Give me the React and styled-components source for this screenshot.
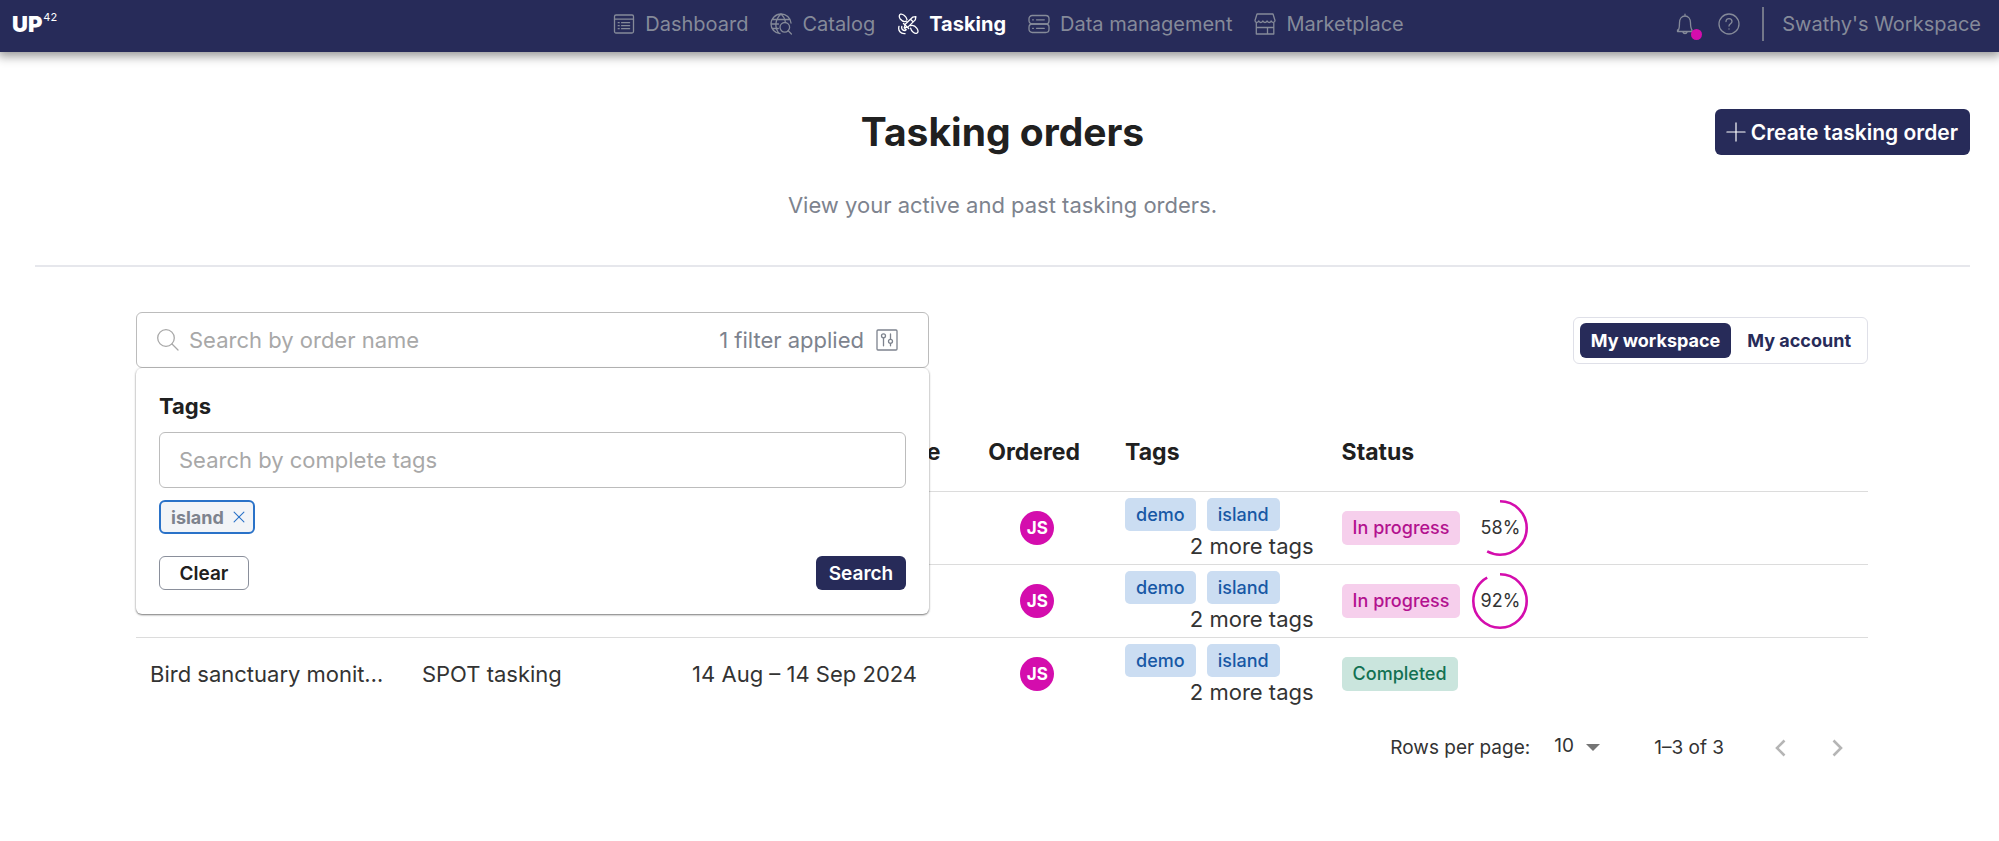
import styled, { createGlobalStyle } from "styled-components";

const navy = "#272b59";
const pink = "#d40dad";
const grey = "#7d838e";

const GlobalStyle = createGlobalStyle`
  * {
    box-sizing: border-box;
  }
  body {
    margin: 0;
    background: #fff;
    color: #202020;
    font-family: Inter, "Liberation Sans", sans-serif;
    font-size: 22px;
  }
  button, input, select {
    font-family: inherit;
  }
`;

const Header = styled.header`
  display: grid;
  grid-template-columns: 1fr auto 1fr;
  align-items: center;
  height: 52px;
  padding: 0 18px 4px 12px;
  background: ${navy};
  box-shadow: 0 2px 10px 2px rgba(0, 0, 0, 0.42);
`;

const Logo = styled.a`
  display: flex;
  align-items: flex-start;
  color: #fff;
  font-size: 22px;
  font-weight: 900;
  line-height: 24px;
  text-decoration: none;
  sup {
    margin-left: 1px;
    font-size: 11px;
    font-weight: 400;
    line-height: 11px;
  }
`;

const Nav = styled.nav`
  display: flex;
  gap: 22px;
  margin-left: 24px;
`;

const NavLink = styled.a`
  display: flex;
  align-items: center;
  gap: 10px;
  color: ${(props) => (props.$active ? "#fff" : "#858a99")};
  font-size: 20px;
  font-weight: ${(props) => (props.$active ? 700 : 400)};
  line-height: 24px;
  text-decoration: none;
`;

const Icon = styled.svg.attrs({ viewBox: "0 0 22 22", "aria-hidden": true })`
  flex: none;
  width: ${(props) => props.$size || 22}px;
  height: ${(props) => props.$size || 22}px;
  fill: none;
  stroke: currentColor;
  stroke-width: 1.3;
  stroke-linecap: round;
  stroke-linejoin: round;
`;

const Account = styled.div`
  display: flex;
  align-items: center;
  justify-content: flex-end;
  color: #858a99;
`;

const IconButton = styled.button`
  position: relative;
  display: flex;
  margin-right: 22px;
  padding: 0;
  border: 0;
  background: none;
  color: inherit;
`;

const Dot = styled.span`
  position: absolute;
  right: -6px;
  bottom: -5px;
  width: 11px;
  height: 11px;
  border-radius: 50%;
  background: ${pink};
`;

const Workspace = styled.a`
  padding-left: 18px;
  border-left: 2px solid #737789;
  color: inherit;
  font-size: 20px;
  line-height: 34px;
  text-decoration: none;
`;

const Main = styled.main`
  padding: 0 29px 0 35px;
`;

const Intro = styled.div`
  display: grid;
  grid-template-columns: 1fr auto 1fr;
  align-items: center;
  padding: 56px 0 47px;
  border-bottom: 2px solid #e6e7ec;
  h1 {
    margin: 0;
    font-size: 39px;
    font-weight: 700;
    line-height: 48px;
  }
  p {
    grid-column: 1 / -1;
    margin: 36px 0 0;
    color: ${grey};
    line-height: 26px;
    text-align: center;
  }
`;

const CreateButton = styled.button`
  grid-column: 3;
  justify-self: end;
  display: flex;
  align-items: center;
  gap: 5px;
  height: 46px;
  padding: 0 12px 0 11px;
  border: 0;
  border-radius: 6px;
  background: ${navy};
  color: #fff;
  font-size: 21px;
  font-weight: 600;
`;

const Orders = styled.section`
  padding: 45px 102px 0 101px;
`;

const Toolbar = styled.div`
  display: flex;
  align-items: center;
  justify-content: space-between;
`;

const SearchArea = styled.div`
  position: relative;
  width: 46%;
  max-width: 793px;
`;

const SearchBox = styled.div`
  display: flex;
  align-items: center;
  height: 56px;
  padding: 0 30px 0 20px;
  border: 1px solid #bcbcbc;
  border-radius: 6px;
  color: #a8a8a8;
  input {
    flex: 1;
    min-width: 0;
    margin-left: 10px;
    padding: 0;
    border: 0;
    outline: 0;
    background: none;
    font-size: 22px;
  }
  input::placeholder {
    color: #a8a8a8;
  }
`;

const FilterButton = styled.button`
  display: flex;
  align-items: center;
  gap: 12px;
  padding: 0;
  border: 0;
  background: none;
  color: ${grey};
  font-size: 22px;
`;

const FilterPanel = styled.form`
  position: absolute;
  z-index: 1;
  top: 100%;
  left: 0;
  right: 0;
  padding: 24px 23px;
  border-radius: 6px;
  background: #fff;
  box-shadow: 0 1px 2px rgba(0, 0, 0, 0.5), 0 0 3px rgba(0, 0, 0, 0.1);
  label {
    display: block;
    font-weight: 700;
    line-height: 28px;
  }
`;

const TagInput = styled.input`
  display: block;
  width: 100%;
  height: 56px;
  margin: 12px 0 12px;
  padding: 0 19px;
  border: 1px solid #bcbcbc;
  border-radius: 6px;
  font-size: 22px;
  &::placeholder {
    color: #a8a8a8;
  }
`;

const FilterChip = styled.button`
  display: flex;
  align-items: center;
  gap: 9px;
  height: 34px;
  padding: 0 8px 0 10px;
  border: 2px solid #2a72c8;
  border-radius: 6px;
  background: #f2f4f7;
  color: ${grey};
  font-size: 18px;
  font-weight: 700;
  svg {
    color: #2a72c8;
  }
`;

const PanelActions = styled.div`
  display: flex;
  justify-content: space-between;
  margin-top: 22px;
`;

const PanelButton = styled.button`
  width: 90px;
  height: 34px;
  padding: 0;
  border: ${(props) => (props.$primary ? "0" : "1px solid #8a8f9b")};
  border-radius: 6px;
  background: ${(props) => (props.$primary ? navy : "#fff")};
  color: ${(props) => (props.$primary ? "#fff" : "#202020")};
  font-size: 19px;
  font-weight: 600;
`;

const Toggle = styled.div`
  display: flex;
  padding: 5px 6px;
  border: 1px solid #dfe0e8;
  border-radius: 6px;
`;

const ToggleButton = styled.button`
  height: 35px;
  padding: 0 11px;
  border: 0;
  border-radius: 6px;
  background: ${(props) => (props.$active ? navy : "#fff")};
  color: ${(props) => (props.$active ? "#fff" : navy)};
  font-size: 18px;
  font-weight: 700;
  & + & {
    padding: 0 10px 0 16px;
  }
`;

const Table = styled.table`
  width: 100%;
  margin-top: 45px;
  border-collapse: collapse;
  table-layout: fixed;
  th, td {
    padding: 0 14px;
    overflow: hidden;
    text-align: left;
    text-overflow: ellipsis;
    white-space: nowrap;
  }
  th {
    height: 78px;
    font-size: 23px;
    font-weight: 700;
  }
  td {
    height: 73px;
    color: #333;
  }
  thead tr, tbody tr:not(:last-child) {
    border-bottom: 1px solid #dcdcdc;
  }
`;

const Column = styled.col`
  width: ${(props) => props.$width};
`;

const Avatar = styled.span`
  display: flex;
  align-items: center;
  justify-content: center;
  width: 34px;
  height: 34px;
  margin-left: 32px;
  border-radius: 50%;
  background: ${pink};
  color: #fff;
  font-size: 17px;
  font-weight: 700;
`;

const TagList = styled.div`
  display: flex;
  flex-wrap: wrap;
  gap: 0 11px;
  padding-top: 5px;
  span {
    padding: 0 11px;
    border-radius: 5px;
    background: #cbddf2;
    color: #1758a5;
    font-size: 18px;
    font-weight: 500;
    line-height: 33px;
  }
  small {
    width: 100%;
    font-size: 22px;
    line-height: 31px;
    text-align: right;
  }
`;

const StatusCell = styled.div`
  display: flex;
  align-items: center;
  gap: 12px;
`;

const Status = styled.span`
  padding: 0 11px;
  border-radius: 5px;
  background: ${(props) => (props.$done ? "#cae5dd" : "#f6cfec")};
  color: ${(props) => (props.$done ? "#127152" : "#b3128f")};
  font-size: 18px;
  font-weight: 500;
  line-height: 34px;
`;

const Ring = styled.div`
  display: grid;
  place-items: center;
  width: 56px;
  height: 56px;
  font-size: 18px;
  svg, span {
    grid-area: 1 / 1;
  }
  circle {
    fill: none;
    stroke: ${pink};
    stroke-width: 2.6;
  }
`;

const Pagination = styled.div`
  display: flex;
  align-items: center;
  justify-content: flex-end;
  height: 75px;
  padding-right: 20px;
  color: #333;
  font-size: 19px;
`;

const PageSize = styled.div`
  display: grid;
  align-items: center;
  margin: 0 54px 0 24px;
  select {
    grid-area: 1 / 1;
    width: 46px;
    padding: 0 0 5px;
    border: 0;
    appearance: none;
    background: none;
    color: inherit;
    font-size: 19px;
  }
  svg {
    grid-area: 1 / 1;
    justify-self: end;
    pointer-events: none;
  }
`;

const PageRange = styled.span`
  margin-right: 12px;
`;

const PageButton = styled.button`
  display: flex;
  margin-left: 34px;
  padding: 0;
  border: 0;
  background: none;
  color: #b5b5b5;
  & svg {
    stroke-width: 2.6;
    stroke-linecap: butt;
    stroke-linejoin: miter;
  }
`;

const DashboardIcon = () => (
  <Icon>
    <rect x="1.5" y="2" width="19" height="18" rx="1.5" />
    <path d="M1.5 6.2h19M5.2 9.7h1M5.2 12.7h1M5.2 15.7h1M8.6 9.7h8M8.6 12.7h8M8.6 15.7h8" />
  </Icon>
);

const CatalogIcon = () => (
  <Icon>
    <path d="M10 20.5C4.8 20 1 16 1 11A10 10 0 0 1 11 1c5.2 0 9.500 3.800 10 9M11 1C4.500 7 4.500 15 9 20.300M11 1c2.600 2.300 3.900 4.800 4.300 7.400M2.300 6.500h17.500M1 11h7.500M2.300 15.500h6" />
    <circle cx="14.8" cy="14.3" r="4.8" />
    <path d="m18.2 17.8 3.2 3.2" />
  </Icon>
);

const TaskingIcon = () => (
  <Icon strokeWidth="1.5">
    <path d="M9.500 8.200C7.500 9 5.200 8.300 3.300 6 1.800 4 2 1.800 3.500 1.200 5.600.5 9.500 3.500 10 6.700M8.200 11.300 15.600 4.200l3.300-.6-.6 3.300-7.400 7.200-3.600.6zM13.500 6.300l2.600 2.500M13.500 12.700c2.200-.9 4.600.1 6.400 2.600 1.500 2 1.500 4.200 0 4.900-2.100.9-5.600-1.600-6.300-5M7.200 14.800l2 2M4.800 13.500c-.6 2.400.9 4.200 3.500 4M2 13.300c-1.300 4.300 1.700 7.800 6 7.300M6.500 10.500l5.200 5" />
  </Icon>
);

const DataIcon = () => (
  <Icon>
    <rect x="1" y="2.5" width="20" height="8.5" rx="3.2" />
    <rect x="1" y="11" width="20" height="8.5" rx="3.2" />
    <path d="M4.600 6.800h.8M8.500 6.800h7.800M4.600 15.300h.8M8.500 15.300h7.800" />
  </Icon>
);

const MarketIcon = () => (
  <Icon>
    <path d="M3 1h16l2 6.500c0 2.300-3 2.600-3.800.4-.5 2.100-3.500 2.100-4.100 0-.6 2.100-3.600 2.100-4.200 0-.6 2.100-3.600 2.100-4.100 0C4 10.100 1 9.800 1 7.500zM2.300 10v11h17.500V10M2.300 14.500h17.500M13.500 14.500V21" />
  </Icon>
);

const navItems = [
  { label: "Dashboard", icon: DashboardIcon },
  { label: "Catalog", icon: CatalogIcon },
  { label: "Tasking", icon: TaskingIcon, active: true },
  { label: "Data management", icon: DataIcon },
  { label: "Marketplace", icon: MarketIcon },
];

const orders = [
  {
    name: "Island coastline",
    collection: "Pléiades Neo",
    dates: "1 Oct – 30 Nov 2024",
    progress: 58,
  },
  {
    name: "Island shoreline",
    collection: "Pléiades Neo",
    dates: "1 Oct – 30 Nov 2024",
    progress: 92,
  },
  {
    name: "Bird sanctuary monitoring",
    collection: "SPOT tasking",
    dates: "14 Aug – 14 Sep 2024",
  },
];

const columns = ["15.7%", "15.6%", "17.1%", "7.9%", "12.5%", "31.2%"];

const Progress = ({ value }) => (
  <Ring>
    <svg width="56" height="56" viewBox="0 0 56 56" aria-hidden="true">
      <circle
        cx="28"
        cy="28"
        r="26.7"
        pathLength="100"
        strokeDasharray={`${value} 100`}
        transform="rotate(-90 28 28)"
      />
    </svg>
    <span>{value}%</span>
  </Ring>
);

const TopBar = () => (
  <Header>
    <Logo href="#">
      UP<sup>42</sup>
    </Logo>
    <Nav>
      {navItems.map(({ label, icon: NavIcon, active }) => (
        <NavLink key={label} href="#" $active={active}>
          <NavIcon />
          {label}
        </NavLink>
      ))}
    </Nav>
    <Account>
      <IconButton aria-label="Notifications">
        <Icon>
          <path d="M11 1.200V3M4.500 17c1-2 1-3.500 1-7.200C5.500 5.800 7.800 3 11 3s5.500 2.800 5.500 6.800c0 3.700 0 5.200 1.500 7.200v1.500H3.500V17zM9 19.200c.5 1.700 3.500 1.700 4 0" />
        </Icon>
        <Dot />
      </IconButton>
      <IconButton aria-label="Help">
        <Icon>
          <circle cx="11" cy="11" r="10" />
          <path d="M8 8.600C8 4.600 14 4.700 14 8.500c0 2.300-3 2.200-3 4.500M11 15.800v.3" />
        </Icon>
      </IconButton>
      <Workspace href="#">Swathy's Workspace</Workspace>
    </Account>
  </Header>
);

const Filters = () => (
  <SearchArea>
    <SearchBox>
      <Icon>
        <circle cx="9" cy="9" r="8.3" />
        <path d="m15 15 6 6" />
      </Icon>
      <input aria-label="Search by order name" placeholder="Search by order name" />
      <FilterButton type="button">
        1 filter applied
        <Icon>
          <rect x="1" y="1" width="20" height="20" rx="1" />
          <path d="M7.500 8.800v8M14.500 5v5.200M14.500 14.500v2.300" />
          <circle cx="7.5" cy="6.8" r="2" />
          <circle cx="14.5" cy="12.3" r="2" />
        </Icon>
      </FilterButton>
    </SearchBox>
    <FilterPanel>
      <label htmlFor="tags">Tags</label>
      <TagInput id="tags" placeholder="Search by complete tags" />
      <FilterChip type="button">
        island
        <Icon $size={12}>
          <path d="m2 2 18 18M20 2 2 20" strokeWidth="2" />
        </Icon>
      </FilterChip>
      <PanelActions>
        <PanelButton type="button">Clear</PanelButton>
        <PanelButton type="button" $primary>
          Search
        </PanelButton>
      </PanelActions>
    </FilterPanel>
  </SearchArea>
);

const OrdersTable = () => (
  <Table>
    <colgroup>
      {columns.map((width, i) => (
        <Column key={i} $width={width} />
      ))}
    </colgroup>
    <thead>
      <tr>
        <th>Name</th>
        <th>Collection</th>
        <th>Acquisition timeframe</th>
        <th>Ordered</th>
        <th>Tags</th>
        <th>Status</th>
      </tr>
    </thead>
    <tbody>
      {orders.map((order) => (
        <tr key={order.name}>
          <td>{order.name}</td>
          <td>{order.collection}</td>
          <td>{order.dates}</td>
          <td>
            <Avatar>JS</Avatar>
          </td>
          <td>
            <TagList>
              <span>demo</span>
              <span>island</span>
              <small>2 more tags</small>
            </TagList>
          </td>
          <td>
            <StatusCell>
              <Status $done={!order.progress}>
                {order.progress ? "In progress" : "Completed"}
              </Status>
              {order.progress && <Progress value={order.progress} />}
            </StatusCell>
          </td>
        </tr>
      ))}
    </tbody>
  </Table>
);

export default function App() {
  return (
    <>
      <GlobalStyle />
      <TopBar />
      <Main>
        <Intro>
          <span />
          <h1>Tasking orders</h1>
          <CreateButton>
            <Icon $size={20}>
              <path d="M11 1v20M1 11h20" />
            </Icon>
            Create tasking order
          </CreateButton>
          <p>View your active and past tasking orders.</p>
        </Intro>
        <Orders>
          <Toolbar>
            <Filters />
            <Toggle>
              <ToggleButton $active>My workspace</ToggleButton>
              <ToggleButton>My account</ToggleButton>
            </Toggle>
          </Toolbar>
          <OrdersTable />
          <Pagination>
            <label htmlFor="page-size">Rows per page:</label>
            <PageSize>
              <select id="page-size" defaultValue="10">
                <option>10</option>
                <option>25</option>
                <option>50</option>
              </select>
              <svg width="14" height="7" viewBox="0 0 14 7" aria-hidden="true">
                <path d="M0 0h14L7 7z" fill="#757575" />
              </svg>
            </PageSize>
            <PageRange>1–3 of 3</PageRange>
            <PageButton aria-label="Previous page">
              <Icon>
                <path d="m14.500 3.500-7.500 7.500 7.500 7.500" />
              </Icon>
            </PageButton>
            <PageButton aria-label="Next page">
              <Icon>
                <path d="m7.500 3.500 7.500 7.500-7.500 7.500" />
              </Icon>
            </PageButton>
          </Pagination>
        </Orders>
      </Main>
    </>
  );
}
